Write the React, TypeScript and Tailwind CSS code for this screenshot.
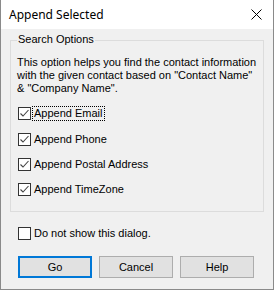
import React from 'react';

const CheckMark = () => (
  <svg width="11" height="11" viewBox="0 0 11 11" className="block">
    <path d="M1.5 5.5 L4 8 L9.5 2" fill="none" stroke="#444" strokeWidth="1.1" />
  </svg>
);

type RowProps = {
  label: string;
  checked?: boolean;
  focused?: boolean;
  className?: string;
};

const CheckRow = ({ label, checked, focused, className }: RowProps) => (
  <div className={`flex items-center h-[17px] ${className ?? ''}`}>
    <div className="w-[13px] h-[13px] border border-[#333333] bg-white flex items-center justify-center">
      {checked && <CheckMark />}
    </div>
    <span
      className={`ml-[2px] px-[1px] leading-[13px] ${
        focused ? 'outline outline-1 outline-dotted outline-[#000]' : ''
      }`}
    >
      {label}
    </span>
  </div>
);

const App = () => {
  return (
    <div className="w-[274px] h-[290px] bg-[#f0f0f0] border-x border-b border-[#8a8a8a] font-['Liberation_Sans',Arial,sans-serif] text-[11px] text-black flex flex-col">
      <div className="h-[29px] bg-white flex items-center justify-between pl-[8px] pr-[11px]">
        <span className="font-['Noto_Sans',sans-serif] text-[12px]">Append Selected</span>
        <svg width="11" height="11" viewBox="0 0 11 11">
          <path d="M0.5 0.5 L10.5 10.5 M10.5 0.5 L0.5 10.5" stroke="#000" strokeWidth="1" />
        </svg>
      </div>

      <div className="relative mt-[11px] ml-[9px] w-[254px] border border-[#dcdcdc] pt-[15px] pb-[13px]">
        <span className="absolute top-[-8px] left-[6px] px-[1px] bg-[#f0f0f0] leading-[13px]">
          Search Options
        </span>
        <p className="pl-[6px] leading-[13px]">
          This option helps you find the contact information
          <br />
          with the given contact based on "Contact Name"
          <br />
          &amp; "Company Name".
        </p>
        <div className="pl-[7px]">
          <CheckRow label="Append Email" checked focused className="mt-[10px]" />
          <CheckRow label="Append Phone" checked className="mt-[9px]" />
          <CheckRow label="Append Postal Address" checked className="mt-[8px]" />
          <CheckRow label="Append TimeZone" checked className="mt-[8px]" />
        </div>
      </div>

      <CheckRow label="Do not show this dialog." className="mt-[13px] ml-[17px]" />

      <div className="flex gap-[7px] ml-[17px] mt-[14px]">
        <button className="w-[74px] h-[22px] bg-[#e1e1e1] border-2 border-[#0078d7]">Go</button>
        <button className="w-[74px] h-[22px] bg-[#e1e1e1] border border-[#adadad]">Cancel</button>
        <button className="w-[74px] h-[22px] bg-[#e1e1e1] border border-[#adadad]">Help</button>
      </div>
    </div>
  );
};

export default App;
